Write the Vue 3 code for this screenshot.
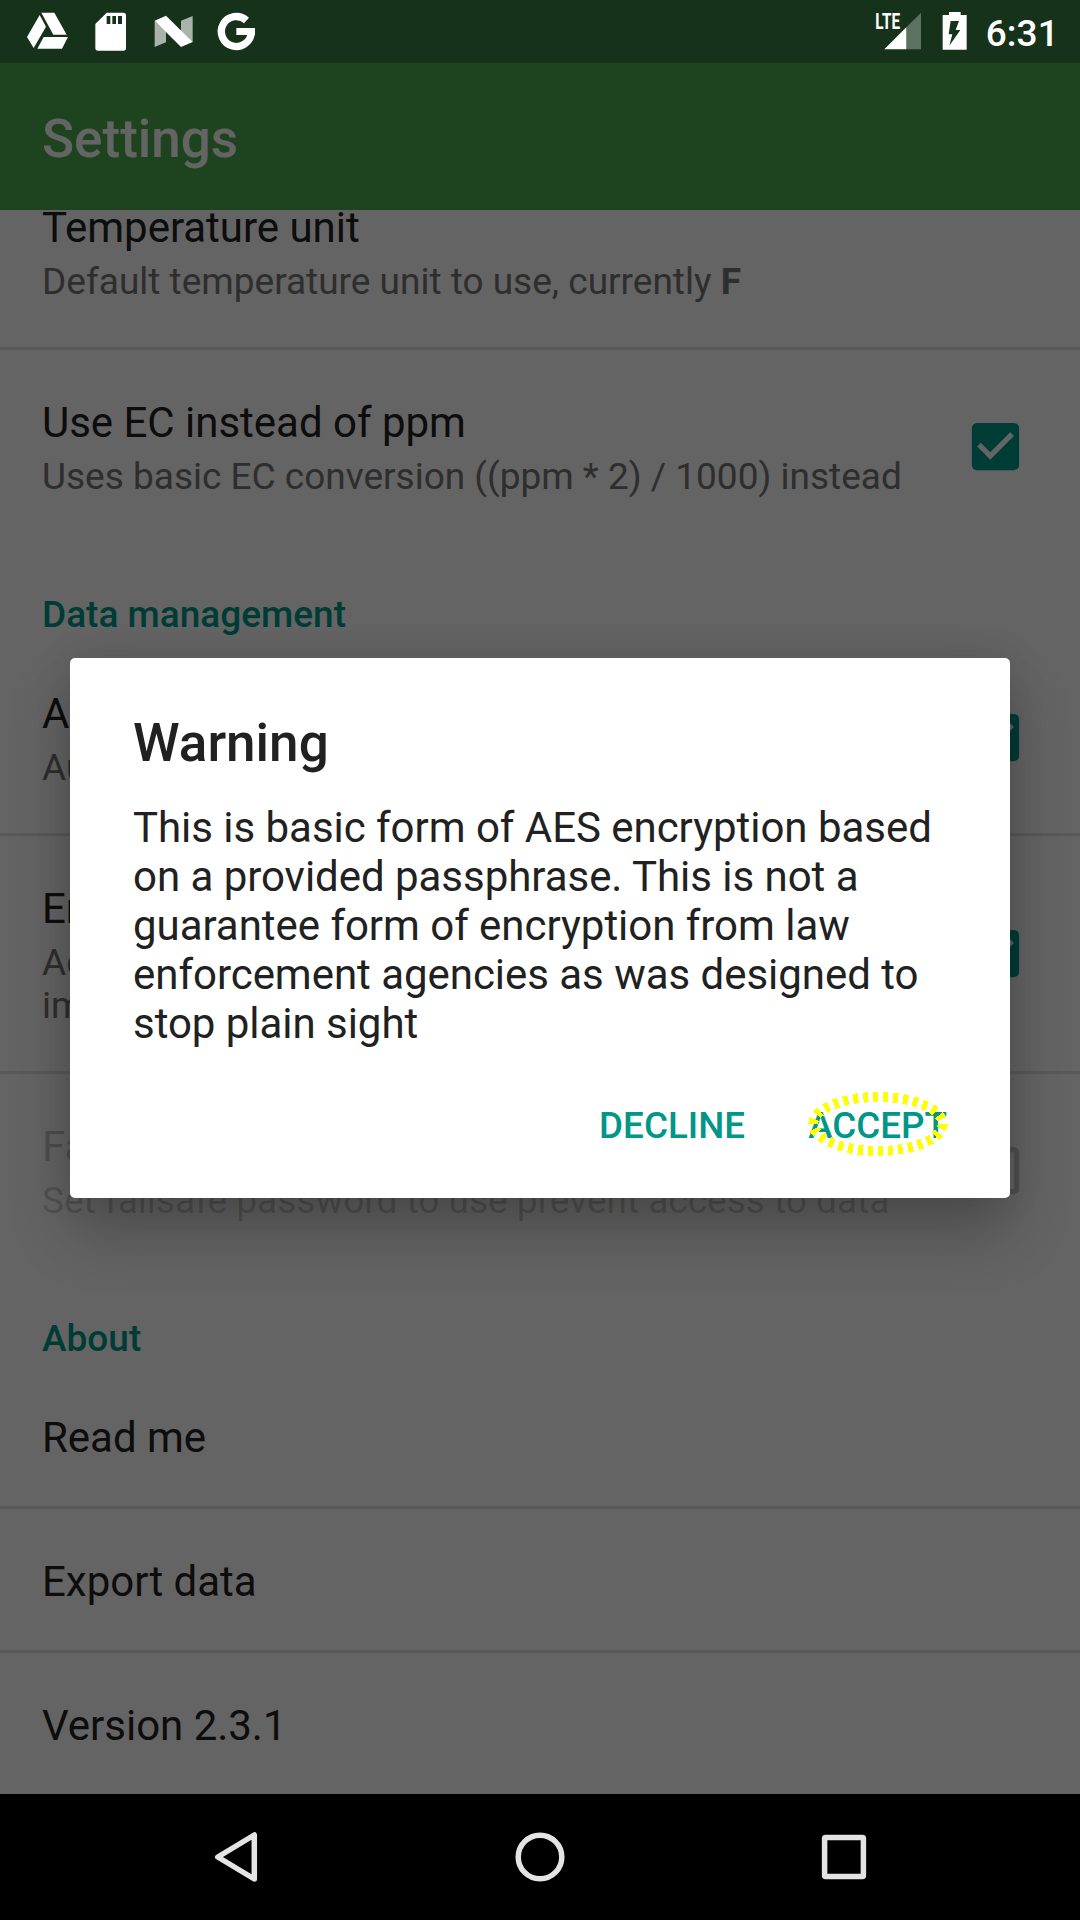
<script setup>
const sections = [
  {
    rows: [
      { title: 'Temperature unit', summary: ['Default temperature unit to use, currently '], value: 'F' },
      { title: 'Use EC instead of ppm', summary: ['Uses basic EC conversion ((ppm * 2) / 1000) instead'], check: 'on' },
    ],
  },
  {
    heading: 'Data management',
    rows: [
      { title: 'Auto backup', summary: ['Automatically back up data'], check: 'on' },
      { title: 'Encrypt data', summary: ['Adds encryption to data and', 'images'], check: 'on' },
      { title: 'Failsafe', summary: ['Set failsafe password to use prevent access to data'], check: 'off', disabled: true },
    ],
  },
  {
    heading: 'About',
    rows: [{ title: 'Read me' }, { title: 'Export data' }, { title: 'Version 2.3.1' }],
  },
]

const message = [
  'This is basic form of AES encryption based',
  'on a provided passphrase. This is not a',
  'guarantee form of encryption from law',
  'enforcement agencies as was designed to',
  'stop plain sight',
]
</script>

<template>
  <div class="screen">
    <header class="status">
      <div class="group">
        <svg width="60" height="63" viewBox="75 0 180 189" fill="#fff">
          <path d="M119 45l19 35-37 64-20-33zM124 38h39l37 66h-40zM131 111h73l-18 35h-74z" />
        </svg>
        <svg width="60" height="63" viewBox="255 0 180 189" fill="#fff">
          <path fill-rule="evenodd" d="M320 38h50q8 0 8 8v98q0 8-8 8h-76q-8 0-8-8V72zM320 48v24h11V48zM337 48v24h11V48zM354 48v24h12V48z" />
        </svg>
        <svg width="60" height="63" viewBox="435 0 180 189">
          <path fill="#a8b3a9" d="M464 62l34 33v32l-34 14zM543 62l35-14v79l-35-30z" />
          <path fill="#fff" d="M464 62l34-15 80 79-35 15z" />
        </svg>
        <svg width="60" height="63" viewBox="615 0 180 189">
          <path fill="none" stroke="#fff" stroke-width="22" d="M739.500 61.500A45 45 0 1 0 754 95V84" />
          <path fill="#fff" d="M709 84h56v21h-56z" />
        </svg>
      </div>
      <div class="group">
        <svg width="60" height="63" viewBox="100 0 180 189">
          <path fill="#5d7160" d="M200 82l44-44v110h-44z" />
          <path fill="#fff" d="M134 148l66-66v66z" />
          <text class="lte" x="107" y="87" textLength="74" lengthAdjust="spacingAndGlyphs">LTE</text>
        </svg>
        <svg width="50" height="63" viewBox="280 0 150 189" fill="#fff">
          <path fill-rule="evenodd" d="M328 36h35v9h18v104h-72V45h19zM333 63l-6 40h11l-9 34 33-47h-14l10-27z" />
        </svg>
        <span class="time">6:31</span>
      </div>
    </header>

    <div class="appbar"><h1>Settings</h1></div>

    <main class="viewport">
      <div class="list">
        <section v-for="(s, i) in sections" :key="i">
          <h2 v-if="s.heading">{{ s.heading }}</h2>
          <div v-for="r in s.rows" :key="r.title" class="row" :class="{ disabled: r.disabled, single: !r.summary }">
            <div class="text">
              <div class="title">{{ r.title }}</div>
              <div v-if="r.summary" class="summary">
                <div v-for="l in r.summary" :key="l">{{ l }}<b v-if="r.value">{{ r.value }}</b></div>
              </div>
            </div>
            <svg v-if="r.check" width="63" height="63" viewBox="0 0 24 24">
              <path v-if="r.check === 'on'" fill="#009688" d="M19 3H5c-1.110 0-2 .9-2 2v14c0 1.100.89 2 2 2h14c1.110 0 2-.9 2-2V5c0-1.100-.89-2-2-2zm-9 14l-5-5 1.410-1.410L10 14.170l7.590-7.590L19 8l-9 9z" />
              <path v-else fill="#000" fill-opacity=".2" d="M19 5v14H5V5h14m0-2H5c-1.100 0-2 .9-2 2v14c0 1.100.9 2 2 2h14c1.100 0 2-.9 2-2V5c0-1.100-.9-2-2-2z" />
            </svg>
          </div>
        </section>
      </div>
    </main>

    <nav class="nav">
      <svg width="84" height="84" viewBox="0 0 84 84"><path d="M23.800 42L60.300 20v44z" /></svg>
      <svg width="84" height="84" viewBox="0 0 84 84"><circle cx="42" cy="42" r="21.800" /></svg>
      <svg width="84" height="84" viewBox="0 0 84 84"><rect x="22.600" y="22.600" width="38.800" height="38.800" rx="1" /></svg>
    </nav>

    <div class="scrim">
      <div class="dialog" role="dialog">
        <h3>Warning</h3>
        <p><span v-for="l in message" :key="l">{{ l }}</span></p>
        <div class="actions">
          <button>DECLINE</button>
          <button>ACCEPT
            <svg class="ring" width="144" height="70" viewBox="0 0 144 70">
              <ellipse cx="72" cy="35" rx="64.700" ry="27" />
            </svg>
          </button>
        </div>
      </div>
    </div>
  </div>
</template>

<style>
body { margin: 0; background: #000; }
</style>

<style scoped>
.screen { position: relative; width: 1080px; height: 1920px; display: flex; flex-direction: column; overflow: hidden; background: #fafafa; font-family: Roboto, sans-serif; color: #212121; }
h1, h2, h3, p { margin: 0; font-weight: 500; }
svg { display: block; flex: none; }
.status { position: relative; z-index: 2; height: 63px; flex: none; display: flex; justify-content: space-between; padding-left: 25px; background: #17321a; color: #fff; }
.group { display: flex; }
.lte { fill: #fff; font: 700 66px Roboto, sans-serif; }
.time { width: 94.200px; padding-left: 2.500px; font-size: 37px; font-weight: 500; line-height: 67px; }
.appbar { height: 147px; flex: none; box-sizing: border-box; padding: 5px 42px 0; background: #4caa4f; color: #fafafa; }
h1 { font-size: 53px; line-height: 143px; }
.viewport { flex: 1; min-height: 0; overflow: hidden; }
.list { margin-top: -55px; }
.row { display: flex; align-items: center; justify-content: space-between; padding: 45px 52.800px 44px 42px; }
.row + .row { border-top: 3px solid #dedede; }
.row.single { padding-bottom: 40px; }
.text { margin: 0; white-space: nowrap; }
.title { font-size: 42px; line-height: 56px; letter-spacing: -.02px; }
.summary { margin-top: 4px; font-size: 37px; line-height: 43px; color: #737373; white-space: pre; }
.row svg { margin: -20px 0 -19px; }
.disabled .title { color: rgba(0, 0, 0, .24); }
.disabled .summary { color: rgba(0, 0, 0, .2); }
h2 { padding: 51px 42px 5px; font-size: 37px; line-height: 43px; color: #009688; }
.nav { height: 126px; flex: none; display: grid; grid-template-columns: repeat(3, 304px); justify-content: center; place-items: center; background: #000; }
.nav svg { fill: none; stroke: #e4e4e4; stroke-width: 5.500; stroke-linejoin: round; }
.scrim { position: absolute; inset: 0 0 126px; display: flex; align-items: flex-start; justify-content: center; padding-top: 658px; background: rgba(0, 0, 0, .6); overflow: hidden; }
.dialog { width: 940px; height: 540px; box-sizing: border-box; padding: 54px 63px 0; border-radius: 5px; background: #fff; box-shadow: 0 34px 62px rgba(0, 0, 0, .24), 0 0 36px rgba(0, 0, 0, .1); }
h3 { font-size: 53px; line-height: 62px; }
p { margin-top: 29px; font-size: 42px; font-weight: 400; line-height: 49px; letter-spacing: -.035px; white-space: nowrap; }
p span { display: block; }
.actions { display: flex; justify-content: flex-end; gap: 63px; margin-top: 56px; }
button { position: relative; padding: 0; border: 0; background: none; font: 500 36.800px/43px Roboto, sans-serif; color: #009688; }
.ring { position: absolute; left: -2.500px; top: -15px; fill: none; stroke: #ff0; stroke-width: 10; stroke-dasharray: 5 5; shape-rendering: crispEdges; }
</style>
